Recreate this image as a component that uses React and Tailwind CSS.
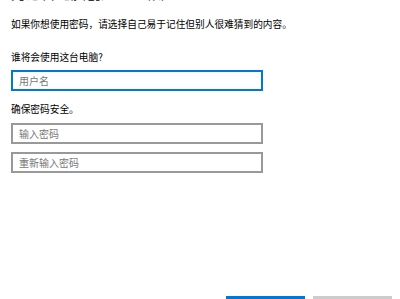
import React from 'react'

const FONT = "font-['Microsoft_YaHei','Noto_Sans_CJK_SC','Noto_Sans',sans-serif]"

function Field({ placeholder, focused }) {
  return (
    <input
      type="text"
      placeholder={placeholder}
      readOnly
      className={`block w-[252px] h-[21px] px-[6px] text-[10px] bg-white outline-none placeholder:text-[#777] border-2 ${
        focused ? 'border-[#0078d7]' : 'border-[#999]'
      }`}
    />
  )
}

export default function App() {
  return (
    <div className={`w-[400px] h-[299px] bg-white overflow-hidden flex flex-col text-black ${FONT}`}>
      <div className="pl-[11px]">
        {/* heading is scrolled mostly out of view */}
        <h1 className="-mt-[17px] text-[15px] leading-[20px] text-[#333]">为这台电脑创建一个帐户</h1>

        <p className="mt-[14px] text-[9.7px] leading-[14px]">
          如果你想使用密码，请选择自己易于记住但别人很难猜到的内容。
        </p>

        <div className="mt-[19px] text-[9.7px] leading-[14px]">谁将会使用这台电脑?</div>
        <div className="mt-[6px]">
          <Field placeholder="用户名" focused />
        </div>

        <div className="mt-[11px] text-[9.7px] leading-[14px]">确保密码安全。</div>
        <div className="mt-[7px] flex flex-col gap-[8px]">
          <Field placeholder="输入密码" />
          <Field placeholder="重新输入密码" />
        </div>
      </div>

      <div className="mt-auto -mb-[20px] flex justify-end gap-[8px] pr-[8px]">
        <button className="w-[79px] h-[23px] bg-[#0078d7]" />
        <button className="w-[79px] h-[23px] bg-[#ccc]" />
      </div>
    </div>
  )
}
